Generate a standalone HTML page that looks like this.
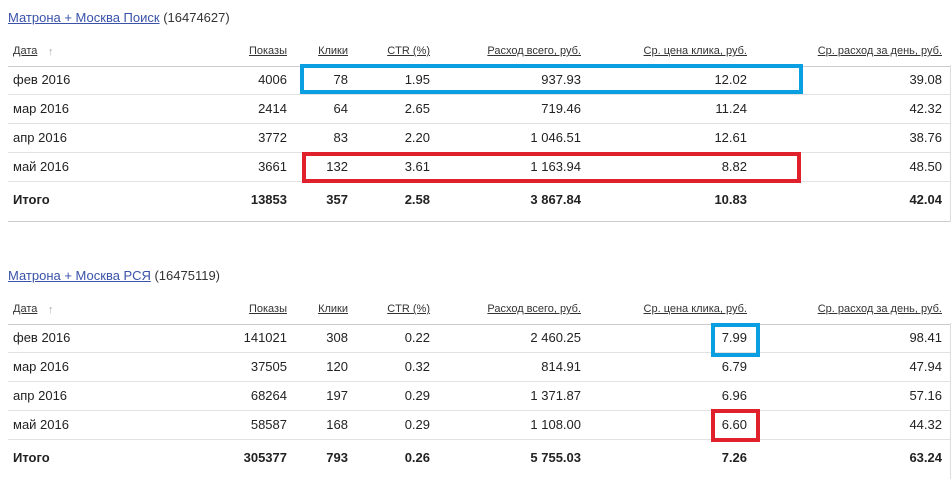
<!DOCTYPE html>
<html><head><meta charset="utf-8"><style>
body{margin:0;width:952px;height:479px;background:#fff;position:relative;overflow:hidden;font-family:"Liberation Sans",Arial,sans-serif;color:#222;font-size:13px}
.t{position:absolute;left:8px;font-size:13px;color:#333}
.t a{color:#3a52a8;text-decoration:underline}
.row{position:absolute;left:8px;width:943px;height:29px;border-bottom:1px solid #e2e2e2}
.row span{position:absolute;top:0;line-height:29px;white-space:nowrap}
.h span{font-size:11px;color:#333;text-decoration:underline}
.h span.ar{text-decoration:none;color:#aaa}
.b span{font-weight:bold}
.c0{left:5px}.c1{right:664px}.c2{right:603px}.c3{right:521px}.c4{right:370px}.c5{right:204px}.c6{right:9px}
.vl{position:absolute;left:950px;width:1px;background:#ddd}
.box{position:absolute;border:4px solid;box-sizing:border-box}
</style></head><body>
<div class="t" style="top:10px"><a>Матрона + Москва Поиск</a> (16474627)</div>
<div class="row h" style="top:37px;border-bottom-color:#ccc"><span class="c0">Дата</span><span class="ar" style="left:40px;top:1px">↑</span><span class="c1">Показы</span><span class="c2">Клики</span><span class="c3">CTR (%)</span><span class="c4">Расход всего, руб.</span><span class="c5">Ср. цена клика, руб.</span><span class="c6">Ср. расход за день, руб.</span></div>
<div class="row" style="top:65px"><span class="c0">фев 2016</span><span class="c1">4006</span><span class="c2">78</span><span class="c3">1.95</span><span class="c4">937.93</span><span class="c5">12.02</span><span class="c6">39.08</span></div>
<div class="row" style="top:94px"><span class="c0">мар 2016</span><span class="c1">2414</span><span class="c2">64</span><span class="c3">2.65</span><span class="c4">719.46</span><span class="c5">11.24</span><span class="c6">42.32</span></div>
<div class="row" style="top:123px"><span class="c0">апр 2016</span><span class="c1">3772</span><span class="c2">83</span><span class="c3">2.20</span><span class="c4">1 046.51</span><span class="c5">12.61</span><span class="c6">38.76</span></div>
<div class="row" style="top:152px"><span class="c0">май 2016</span><span class="c1">3661</span><span class="c2">132</span><span class="c3">3.61</span><span class="c4">1 163.94</span><span class="c5">8.82</span><span class="c6">48.50</span></div>
<div class="row b" style="top:181px;height:40px;border-bottom-color:#ccc"><span class="c0" style="line-height:38px">Итого</span><span class="c1" style="line-height:38px">13853</span><span class="c2" style="line-height:38px">357</span><span class="c3" style="line-height:38px">2.58</span><span class="c4" style="line-height:38px">3 867.84</span><span class="c5" style="line-height:38px">10.83</span><span class="c6" style="line-height:38px">42.04</span></div>
<div class="vl" style="top:65px;height:157px"></div>
<div class="box" style="left:300px;top:64px;width:503px;height:30px;border-color:#0a9fe0"></div>
<div class="box" style="left:302px;top:152px;width:499px;height:31px;border-color:#e0212b"></div>

<div class="t" style="top:268px"><a>Матрона + Москва РСЯ</a> (16475119)</div>
<div class="row h" style="top:295px;border-bottom-color:#ccc"><span class="c0">Дата</span><span class="ar" style="left:40px;top:1px">↑</span><span class="c1">Показы</span><span class="c2">Клики</span><span class="c3">CTR (%)</span><span class="c4">Расход всего, руб.</span><span class="c5">Ср. цена клика, руб.</span><span class="c6">Ср. расход за день, руб.</span></div>
<div class="row" style="top:323px"><span class="c0">фев 2016</span><span class="c1">141021</span><span class="c2">308</span><span class="c3">0.22</span><span class="c4">2 460.25</span><span class="c5">7.99</span><span class="c6">98.41</span></div>
<div class="row" style="top:352px"><span class="c0">мар 2016</span><span class="c1">37505</span><span class="c2">120</span><span class="c3">0.32</span><span class="c4">814.91</span><span class="c5">6.79</span><span class="c6">47.94</span></div>
<div class="row" style="top:381px"><span class="c0">апр 2016</span><span class="c1">68264</span><span class="c2">197</span><span class="c3">0.29</span><span class="c4">1 371.87</span><span class="c5">6.96</span><span class="c6">57.16</span></div>
<div class="row" style="top:410px"><span class="c0">май 2016</span><span class="c1">58587</span><span class="c2">168</span><span class="c3">0.29</span><span class="c4">1 108.00</span><span class="c5">6.60</span><span class="c6">44.32</span></div>
<div class="row b" style="top:439px;height:40px;border-bottom:none"><span class="c0" style="line-height:38px">Итого</span><span class="c1" style="line-height:38px">305377</span><span class="c2" style="line-height:38px">793</span><span class="c3" style="line-height:38px">0.26</span><span class="c4" style="line-height:38px">5 755.03</span><span class="c5" style="line-height:38px">7.26</span><span class="c6" style="line-height:38px">63.24</span></div>
<div class="vl" style="top:323px;height:156px"></div>
<div class="box" style="left:711px;top:323px;width:49px;height:34px;border-color:#0a9fe0"></div>
<div class="box" style="left:711px;top:409px;width:49px;height:33px;border-color:#e0212b"></div>
</body></html>
